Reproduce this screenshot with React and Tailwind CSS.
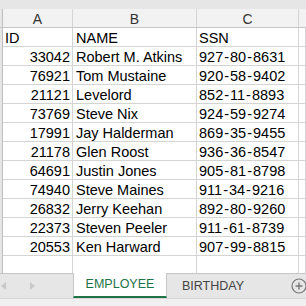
import React from "react";

const rows = [
  ["33042", "Robert M. Atkins", "927-80-8631"],
  ["76921", "Tom Mustaine", "920-58-9402"],
  ["21121", "Levelord", "852-11-8893"],
  ["73769", "Steve Nix", "924-59-9274"],
  ["17991", "Jay Halderman", "869-35-9455"],
  ["21178", "Glen Roost", "936-36-8547"],
  ["64691", "Justin Jones", "905-81-8798"],
  ["74940", "Steve Maines", "911-34-9216"],
  ["26832", "Jerry Keehan", "892-80-9260"],
  ["22373", "Steven Peeler", "911-61-8739"],
  ["20553", "Ken Harward", "907-99-8815"],
];

const Ssn = ({ value }) => {
  const parts = value.split("-");
  return (
    <span>
      {parts.map((p, i) => (
        <React.Fragment key={i}>
          {i > 0 && <span className="mx-[1px]">-</span>}
          {p}
        </React.Fragment>
      ))}
    </span>
  );
};

const cell = "h-[19px] shrink-0 border-b border-r border-[#d4d4d4] flex items-end leading-[12px] pb-[2px] overflow-hidden whitespace-nowrap";

const Row = ({ a, b, c, aLeft }) => (
  <div className="flex">
    <div className="h-[19px] w-[3px] shrink-0 bg-[#e6e6e6] border-r border-[#bfbfbf]" />
    <div className={`${cell} w-[70px] ${aLeft ? "justify-start pl-[2px]" : "justify-end pr-[2px]"}`}>{a}</div>
    <div className={`${cell} w-[124px] pl-[3px]`}>{b}</div>
    <div className={`${cell} w-[102px] pl-[2px]`}>{c}</div>
    <div className={`${cell} flex-1`} />
  </div>
);

export default function App() {
  return (
    <div className="w-[306px] h-[306px] flex flex-col overflow-hidden bg-white text-black text-[14.5px] font-['Liberation_Sans',Arial,sans-serif]">
      {/* top strip */}
      <div className="h-[9px] shrink-0 bg-[#e6e6e6]" />

      {/* column headers */}
      <div className="flex h-[19px] shrink-0 bg-[#f2f2f2] border-b border-[#c6c6c6] text-[#333] text-[14px]">
        <div className="w-[3px] shrink-0 bg-[#e6e6e6] border-r border-[#bfbfbf]" />
        <div className="w-[70px] shrink-0 border-r border-[#d4d4d4] flex items-center justify-center pt-[2px]">A</div>
        <div className="w-[124px] shrink-0 border-r border-[#d4d4d4] flex items-center justify-center pt-[2px]">B</div>
        <div className="w-[102px] shrink-0 border-r border-[#d4d4d4] flex items-center justify-center pt-[2px]">C</div>
        <div className="flex-1" />
      </div>

      {/* sheet */}
      <div className="flex-1 overflow-hidden">
        <Row a="ID" b="NAME" c="SSN" aLeft />
        {rows.map((r) => (
          <Row key={r[0]} a={r[0]} b={r[1]} c={<Ssn value={r[2]} />} />
        ))}
        <Row a="" b="" c="" />
      </div>

      {/* sheet tabs */}
      <div className="h-[25px] shrink-0 flex bg-[#e6e6e6] border-t border-[#c6c6c6] text-[12.5px]">
        <div className="w-[73px] shrink-0 flex items-center gap-[24px] pl-[1px]">
          <svg width="5" height="8" viewBox="0 0 5 8"><path d="M5 0 L0 4 L5 8 Z" fill="#c8c8c8" /></svg>
          <svg width="5" height="8" viewBox="0 0 5 8"><path d="M0 0 L5 4 L0 8 Z" fill="#c8c8c8" /></svg>
        </div>
        <div className="w-[94px] shrink-0 -mt-px bg-white border-x border-[#c6c6c6] border-b-2 border-b-[#217346] flex items-center justify-center text-[#217346]">
          EMPLOYEE
        </div>
        <div className="w-[92px] shrink-0 flex items-center justify-center text-[#444]">BIRTHDAY</div>
        <div className="w-px h-[14px] self-center bg-[#9a9a9a]" />
        <div className="flex-1 flex items-center pl-[32px]">
          <svg width="16" height="16" viewBox="0 0 16 16" className="shrink-0">
            <circle cx="8" cy="8" r="7" fill="none" stroke="#777" strokeWidth="1.2" />
            <path d="M8 4.5 V11.5 M4.5 8 H11.5" stroke="#777" strokeWidth="1.4" />
          </svg>
        </div>
      </div>

      {/* bottom strip */}
      <div className="h-[8px] shrink-0 bg-[#f0f0f0] border-t border-[#d6d6d6]" />
    </div>
  );
}
